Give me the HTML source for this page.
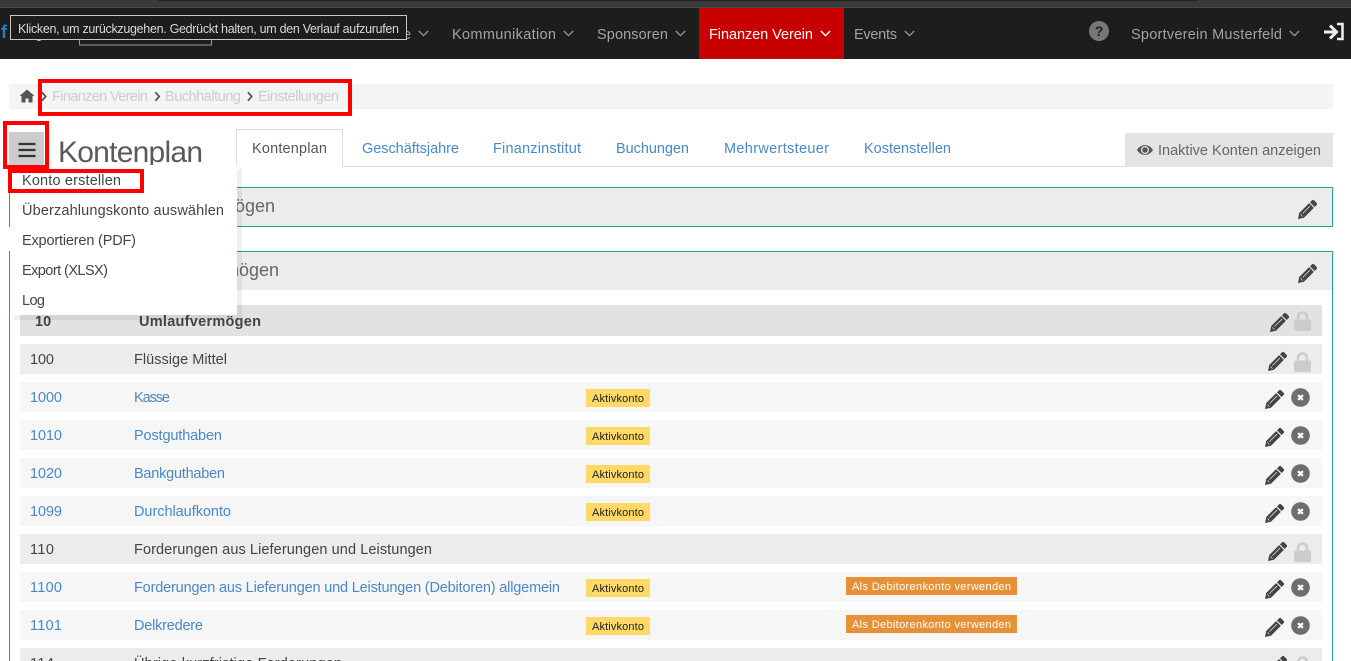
<!DOCTYPE html>
<html lang="de"><head><meta charset="utf-8"><title>Kontenplan</title>
<style>
html,body{margin:0;padding:0;background:#fff;width:1351px;height:661px;overflow:hidden}
svg{display:block}
text{font-family:"Liberation Sans",sans-serif;font-size:14.5px;fill:#444}
.b{fill:#4a88c7}
.n{fill:#a3a3a3;font-size:14.5px}
.c{fill:#ccc;font-size:14.5px}
.y{fill:#222;font-size:11px}
.o{fill:#fff;font-size:11px}
.h{fill:#666;font-size:18px}
.bold{font-weight:bold}
</style></head><body>
<svg width="1351" height="661" viewBox="0 0 1351 661" xmlns="http://www.w3.org/2000/svg">
<defs>
<symbol id="p" viewBox="0 0 20 20" overflow="visible"><path d="M14.6 .5a1.8 1.8 0 0 1 2.500 0l2.400 2.400a1.800 1.800 0 0 1 0 2.500l-2 2-4.900-4.900zM11.700 3.300l5 5L6.300 18.700 0 20l1.300-6.300z" fill="#444"/><path d="M12.600 6.400 4.700 14.300M2.600 15.300l2.100 2.100" stroke="#ddd" stroke-width=".8" fill="none"/></symbol>
<symbol id="l" viewBox="0 0 17 20"><path d="M4 9V6a4.500 4.500 0 0 1 9 0v3" fill="none" stroke="#ccc" stroke-width="2.600"/><rect x="0" y="8.500" width="17" height="11.500" rx="2" fill="#ccc"/></symbol>
<symbol id="x" viewBox="0 0 20 20"><circle cx="10" cy="10" r="9.800" fill="#6e6e6e"/><path d="M7.500 7.500l5 5M12.500 7.500l-5 5" stroke="#fff" stroke-width="2.400"/></symbol>
<symbol id="v" viewBox="0 0 13 8"><path d="M1 1l5.500 5.500L12 1" fill="none" stroke="currentColor" stroke-width="1.700"/></symbol>
<symbol id="r" viewBox="0 0 7 12"><path d="M1 1l4.500 5L1 11" fill="none" stroke="#555" stroke-width="2"/></symbol>
</defs>

<!-- top -->
<rect width="1351" height="59" fill="#1d1d1d"/>
<rect width="1351" height="8" fill="#3a3a3a"/>
<rect x="158" width="1040" height="1" fill="#222"/>
<rect y="7" width="1351" height="1" fill="#4a4a4a"/>
<text x="1" y="38" style="font-size:18px;font-weight:bold;fill:#1583c4">f</text>
<circle cx="39" cy="38" r="3" fill="#ccc"/>
<rect x="79.500" y="30" width="132" height="15" fill="none" stroke="#999"/>
<text class="n" x="403" y="39">e</text>
<use href="#v" x="418" y="30" width="11" height="7" style="color:#8c8c8c"/>
<text class="n" x="452" y="39" textLength="104">Kommunikation</text>
<use href="#v" x="563" y="30" width="11" height="7" style="color:#8c8c8c"/>
<text class="n" x="597" y="39" textLength="71">Sponsoren</text>
<use href="#v" x="675" y="30" width="11" height="7" style="color:#8c8c8c"/>
<rect x="699" y="8" width="145" height="51" fill="#c80000"/>
<text x="709" y="39" textLength="104" style="fill:#fff">Finanzen Verein</text>
<use href="#v" x="820" y="30" width="11" height="7" style="color:#fff"/>
<text class="n" x="854" y="39" textLength="43">Events</text>
<use href="#v" x="904" y="30" width="11" height="7" style="color:#8c8c8c"/>
<circle cx="1099" cy="31" r="10" fill="#777"/>
<text x="1099" y="36" text-anchor="middle" style="font-size:14px;font-weight:bold;fill:#222">?</text>
<text class="n" x="1131" y="39" textLength="151">Sportverein Musterfeld</text>
<use href="#v" x="1289" y="30" width="11" height="7" style="color:#8c8c8c"/>
<path d="M1324 32h11M1330 25.500l6.500 6.500-6.500 6.500" fill="none" stroke="#eee" stroke-width="3"/>
<path d="M1337 24h5.500v15H1337" fill="none" stroke="#eee" stroke-width="2.500"/>

<!-- tooltip -->
<rect x="10.500" y="15.500" width="396" height="24" fill="#1d1d1d" stroke="#c8c8c8"/>
<text x="18" y="33" textLength="381" style="font-size:12.5px;fill:#d8d8d8">Klicken, um zurückzugehen. Gedrückt halten, um den Verlauf aufzurufen</text>

<!-- breadcrumb -->
<rect x="9" y="84" width="1324" height="25" fill="#f4f4f4"/>
<path d="M27 89.500l-7.500 6.500h2v6.500h4v-4h3v4h4V96h2z" fill="#555"/>
<use href="#r" x="41" y="91" width="6" height="11"/>
<text class="c" x="52" y="101" textLength="96">Finanzen Verein</text>
<use href="#r" x="154.500" y="91" width="6" height="11"/>
<text class="c" x="165" y="101" textLength="76">Buchhaltung</text>
<use href="#r" x="247" y="91" width="6" height="11"/>
<text class="c" x="258" y="101" textLength="81">Einstellungen</text>

<!-- tabs -->
<text x="58" y="162" textLength="145" style="font-size:30px;fill:#5a5a5a">Kontenplan</text>
<path d="M236 166.500H1125" stroke="#ddd"/>
<path d="M236.500 167V129.500H342.500V167" fill="#fff" stroke="#ddd"/>
<rect x="237" y="166" width="105" height="2" fill="#fff"/>
<text x="252" y="153" textLength="75" style="fill:#555">Kontenplan</text>
<text class="b" x="362" y="153" textLength="97">Geschäftsjahre</text>
<text class="b" x="493" y="153" textLength="88">Finanzinstitut</text>
<text class="b" x="616" y="153" textLength="73">Buchungen</text>
<text class="b" x="724" y="153" textLength="105">Mehrwertsteuer</text>
<text class="b" x="864" y="153" textLength="87">Kostenstellen</text>
<rect x="1125" y="133" width="208" height="34" fill="#e4e4e4"/>
<path d="M1137 150c4-6.500 12-6.500 16 0c-4 6.500-12 6.500-16 0z" fill="#555"/>
<circle cx="1145" cy="150" r="3.400" fill="none" stroke="#e4e4e4" stroke-width="1.300"/>
<text x="1158" y="155" textLength="163" style="fill:#666">Inaktive Konten anzeigen</text>

<!-- panels -->
<rect x="9.500" y="187.500" width="1323" height="39" fill="#ececec" stroke="#1fa596"/>
<text class="h" x="275" y="212" text-anchor="end">Anlagevermögen</text>
<use href="#p" x="1298" y="200" width="19" height="19"/>
<rect x="9.500" y="251.500" width="1323" height="420" fill="#fff" stroke="#1fa596"/>
<rect x="10" y="252" width="1322" height="38" fill="#ececec"/>
<text class="h" x="279" y="276" text-anchor="end">Umlaufvermögen</text>
<use href="#p" x="1298" y="264" width="19" height="19"/>

<!-- rows -->
<rect x="20" y="305" width="1302" height="31" fill="#e2e2e2"/>
<text class="bold" x="35" y="326">10</text>
<text class="bold" x="139" y="326" textLength="122">Umlaufvermögen</text>
<use href="#p" x="1270" y="313" width="19" height="19"/><use href="#l" x="1294" y="311" width="17" height="20"/>

<rect x="20" y="344" width="1302" height="30" fill="#ececec"/>
<text x="30" y="364" textLength="24">100</text>
<text x="134" y="364" textLength="93">Flüssige Mittel</text>
<use href="#p" x="1268" y="352" width="19" height="19"/><use href="#l" x="1294" y="352" width="17" height="20"/>

<rect x="20" y="382" width="1302" height="30" fill="#f6f6f6"/>
<text class="b" x="30" y="402" textLength="32">1000</text>
<text class="b" x="134" y="402" textLength="36">Kasse</text>
<rect x="586" y="389" width="64" height="18" fill="#ffd966"/><text class="y" x="592" y="402" textLength="52">Aktivkonto</text>
<use href="#p" x="1265" y="390" width="19" height="19"/><use href="#x" x="1291" y="388" width="19" height="19"/>

<rect x="20" y="420" width="1302" height="30" fill="#f6f6f6"/>
<text class="b" x="30" y="440" textLength="32">1010</text>
<text class="b" x="134" y="440" textLength="88">Postguthaben</text>
<rect x="586" y="427" width="64" height="18" fill="#ffd966"/><text class="y" x="592" y="440" textLength="52">Aktivkonto</text>
<use href="#p" x="1265" y="428" width="19" height="19"/><use href="#x" x="1291" y="426" width="19" height="19"/>

<rect x="20" y="458" width="1302" height="30" fill="#f6f6f6"/>
<text class="b" x="30" y="478" textLength="32">1020</text>
<text class="b" x="134" y="478" textLength="91">Bankguthaben</text>
<rect x="586" y="465" width="64" height="18" fill="#ffd966"/><text class="y" x="592" y="478" textLength="52">Aktivkonto</text>
<use href="#p" x="1265" y="466" width="19" height="19"/><use href="#x" x="1291" y="464" width="19" height="19"/>

<rect x="20" y="496" width="1302" height="30" fill="#f6f6f6"/>
<text class="b" x="30" y="516" textLength="32">1099</text>
<text class="b" x="134" y="516" textLength="97">Durchlaufkonto</text>
<rect x="586" y="503" width="64" height="18" fill="#ffd966"/><text class="y" x="592" y="516" textLength="52">Aktivkonto</text>
<use href="#p" x="1265" y="504" width="19" height="19"/><use href="#x" x="1291" y="502" width="19" height="19"/>

<rect x="20" y="534" width="1302" height="30" fill="#ececec"/>
<text x="30" y="554" textLength="24">110</text>
<text x="134" y="554" textLength="298">Forderungen aus Lieferungen und Leistungen</text>
<use href="#p" x="1268" y="542" width="19" height="19"/><use href="#l" x="1294" y="542" width="17" height="20"/>

<rect x="20" y="572" width="1302" height="30" fill="#f6f6f6"/>
<text class="b" x="30" y="592" textLength="32">1100</text>
<text class="b" x="134" y="592" textLength="426">Forderungen aus Lieferungen und Leistungen (Debitoren) allgemein</text>
<rect x="586" y="579" width="64" height="18" fill="#ffd966"/><text class="y" x="592" y="592" textLength="52">Aktivkonto</text>
<rect x="846" y="577" width="171" height="18" fill="#e69138"/><text class="o" x="852" y="590" textLength="159">Als Debitorenkonto verwenden</text>
<use href="#p" x="1265" y="580" width="19" height="19"/><use href="#x" x="1291" y="578" width="19" height="19"/>

<rect x="20" y="610" width="1302" height="30" fill="#f6f6f6"/>
<text class="b" x="30" y="630" textLength="32">1101</text>
<text class="b" x="134" y="630" textLength="69">Delkredere</text>
<rect x="586" y="617" width="64" height="18" fill="#ffd966"/><text class="y" x="592" y="630" textLength="52">Aktivkonto</text>
<rect x="846" y="615" width="171" height="18" fill="#e69138"/><text class="o" x="852" y="628" textLength="159">Als Debitorenkonto verwenden</text>
<use href="#p" x="1265" y="618" width="19" height="19"/><use href="#x" x="1291" y="616" width="19" height="19"/>

<rect x="20" y="648" width="1302" height="30" fill="#ececec"/>
<text x="30" y="668" textLength="24">114</text>
<text x="134" y="668" textLength="208">Übrige kurzfristige Forderungen</text>
<use href="#p" x="1268" y="656" width="19" height="19"/><use href="#l" x="1294" y="656" width="17" height="20"/>

<!-- dropdown -->
<rect x="14" y="169" width="228" height="151" fill="#000" opacity=".06"/>
<rect x="10" y="165" width="227" height="150" fill="#fff"/>
<text x="22" y="185" textLength="99">Konto erstellen</text>
<text x="22" y="215" textLength="202">Überzahlungskonto auswählen</text>
<text x="22" y="245" textLength="114">Exportieren (PDF)</text>
<text x="22" y="275" textLength="86">Export (XLSX)</text>
<text x="22" y="305" textLength="23">Log</text>

<!-- hamburger -->
<rect x="9" y="132" width="35" height="33" fill="#ccc"/>
<path d="M18.500 144h17M18.500 150h17M18.500 156h17" stroke="#333" stroke-width="2.200"/>

<!-- red markers -->
<rect x="40" y="81" width="310" height="33" fill="none" stroke="#f00" stroke-width="4"/>
<rect x="5" y="123" width="42" height="44" fill="none" stroke="#f00" stroke-width="4"/>
<rect x="10" y="171" width="132" height="20" fill="none" stroke="#f00" stroke-width="4"/>
</svg>
</body></html>
